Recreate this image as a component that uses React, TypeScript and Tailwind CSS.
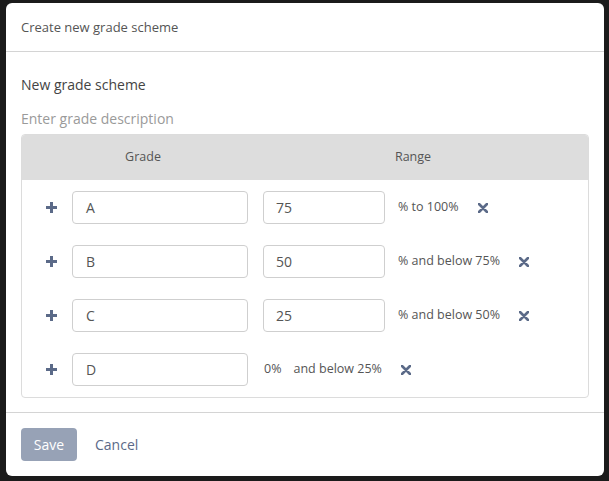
import React from 'react';

const PlusIcon = () => (
  <svg width="11" height="11" viewBox="0 0 11 11" className="text-[#5b6a88]">
    <path d="M4 0h3v4h4v3H7v4H4V7H0V4h4z" fill="currentColor" />
  </svg>
);

const CrossIcon = () => (
  <svg width="10" height="10" viewBox="0 0 10 10" className="text-[#5b6a88]">
    <path d="M1 1L9 9M9 1L1 9" stroke="currentColor" strokeWidth="2.6" strokeLinecap="round" />
  </svg>
);

type Row = { grade: string; min?: string; label: string; fixed?: string };

const rows: Row[] = [
  { grade: 'A', min: '75', label: '% to 100%' },
  { grade: 'B', min: '50', label: '% and below 75%' },
  { grade: 'C', min: '25', label: '% and below 50%' },
  { grade: 'D', fixed: '0%', label: 'and below 25%' },
];

export default function App() {
  return (
    <div
      className="w-[609px] h-[481px] bg-[#1b1b1b] overflow-hidden pt-[3px] pl-[6px]"
      style={{ fontFamily: '"Open Sans", "Noto Sans", sans-serif' }}
    >
      {/* Modal */}
      <div className="w-[598px] h-[473px] bg-white rounded-[6px] flex flex-col">
        {/* Header */}
        <div className="h-[49px] border-b border-[#d4d4d4] flex items-center pt-[1px] px-[15px] text-[13px] text-[#555]">
          Create new grade scheme
        </div>

        {/* Body */}
        <div className="px-[15px] pt-[23px] pb-[14px] border-b border-[#d4d4d4]">
          <div className="text-[14px] leading-[20px] text-[#444]">New grade scheme</div>
          <div className="mt-[14px] text-[14px] leading-[20px] text-[#9a9a9a]">Enter grade description</div>

          <div className="mt-[5px] border border-[#dcdcdc] rounded-[4px]">
            <div className="h-[45px] bg-[#dddddd] rounded-t-[3px] flex items-center text-[12.5px] text-[#555]">
              <div className="w-[242px] text-center">Grade</div>
              <div className="flex-1 text-center pr-[26px]">Range</div>
            </div>
            <div className="flex flex-col gap-[21px] py-[11px]">
              {rows.map((r) => (
                <div key={r.grade} className="flex items-center h-[33px]">
                  <div className="w-[50px] flex justify-end pr-[15px]">
                    <PlusIcon />
                  </div>
                  <div className="w-[176px] h-[33px] border border-[#cfcfcf] rounded-[4px] flex items-center pl-[13px] text-[14px] text-[#555]">
                    {r.grade}
                  </div>
                  {r.min ? (
                    <>
                      <div className="ml-[15px] w-[122px] h-[33px] border border-[#cfcfcf] rounded-[4px] flex items-center pl-[12px] text-[14px] text-[#555]">
                        {r.min}
                      </div>
                      <span className="ml-[13px] text-[12.5px] text-[#555]">{r.label}</span>
                    </>
                  ) : (
                    <>
                      <span className="ml-[16px] text-[12.5px] text-[#555]">{r.fixed}</span>
                      <span className="ml-[12px] text-[12.5px] text-[#555]">{r.label}</span>
                    </>
                  )}
                  <span className="ml-[19px] flex items-center">
                    <CrossIcon />
                  </span>
                </div>
              ))}
            </div>
          </div>
        </div>

        {/* Footer */}
        <div className="px-[15px] pt-[15px] flex items-center gap-[18px]">
          <button className="w-[56px] h-[33px] rounded-[4px] bg-[#97a2b6] text-white text-[14px]">Save</button>
          <span className="text-[14px] text-[#5b6a88]">Cancel</span>
        </div>
      </div>
    </div>
  );
}
